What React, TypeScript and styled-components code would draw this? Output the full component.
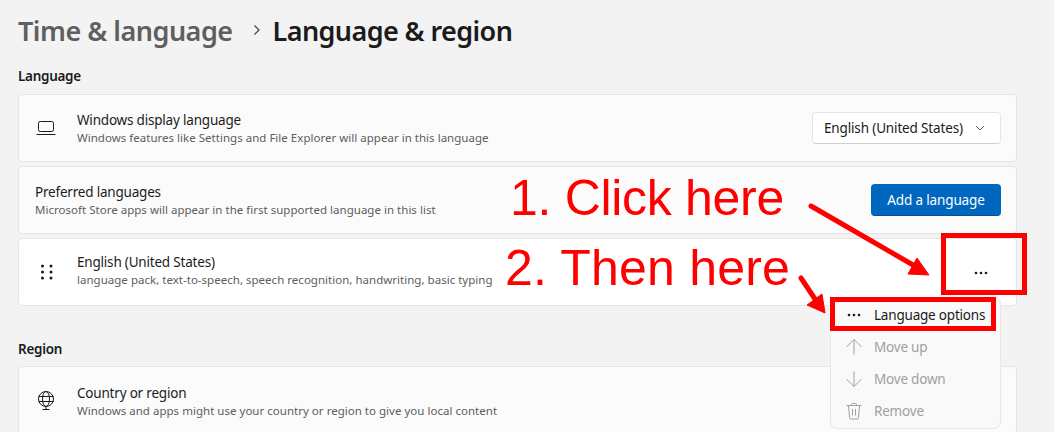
import React from "react";
import styled, { createGlobalStyle } from "styled-components";

const Global = createGlobalStyle`
  html, body { margin: 0; padding: 0; height: 432px; overflow: hidden; background: #f3f3f3; }
  body { font-family: "Noto Sans", "Open Sans", sans-serif; color: #1b1b1b; }
  #root { height: 432px; overflow: hidden; }
`;

const Page = styled.div`
  position: relative;
  width: 1054px;
  height: 432px;
  overflow: hidden;
  box-sizing: border-box;
  padding: 10px 37px 0 18px;
`;
const Breadcrumb = styled.header`
  display: flex;
  align-items: center;
  height: 40px;
  font-size: 27px;
  font-weight: 600;
  letter-spacing: -0.5px;
  white-space: nowrap;
`;
const Parent = styled.span`
  color: #5f5f5f;
`;
const Current = styled.span`
  letter-spacing: -0.6px;
`;
const Crumb = styled.svg`
  width: 10px;
  height: 12px;
  margin: 0 11px 0 19px;
  flex: none;
`;
const SectionTitle = styled.h2<{ $top: number; $bottom: number }>`
  margin: ${(p) => p.$top}px 0 ${(p) => p.$bottom}px;
  height: 20px;
  line-height: 20px;
  font-size: 13.5px;
  font-weight: 600;
  letter-spacing: -0.3px;
  color: #1b1b1b;
`;
const Card = styled.section<{ $white?: boolean }>`
  box-sizing: border-box;
  height: 68px;
  margin-bottom: 4px;
  display: flex;
  align-items: center;
  padding: 0 15px 0 16px;
  background: ${(p) => (p.$white ? "#ffffff" : "#fbfbfb")};
  border: 1px solid #e5e5e5;
  border-radius: 4px;
`;
const IconSlot = styled.div`
  width: 42px;
  flex: none;
  display: flex;
  align-items: center;
`;
const Copy = styled.div<{ $nudge: number }>`
  flex: 1;
  min-width: 0;
  display: flex;
  flex-direction: column;
  margin-top: ${(p) => p.$nudge}px;
`;
const Title = styled.div`
  font-size: 13.5px;
  line-height: 19px;
  color: #1b1b1b;
  letter-spacing: -0.2px;
`;
const Sub = styled.div`
  font-size: 11.5px;
  line-height: 16px;
  color: #5d5d5d;
  letter-spacing: 0.02px;
`;
const Select = styled.div`
  box-sizing: border-box;
  width: 189px;
  height: 32px;
  display: flex;
  align-items: center;
  justify-content: space-between;
  padding: 0 15px 0 11px;
  background: #fff;
  border: 1px solid #e5e5e5;
  border-bottom-color: #d0d0d0;
  border-radius: 4px;
  font-size: 13.5px;
  color: #1b1b1b;
  letter-spacing: -0.15px;
`;
const Primary = styled.button`
  box-sizing: border-box;
  width: 130px;
  height: 32px;
  border: 0;
  border-bottom: 1px solid #0a4f93;
  border-radius: 4px;
  background: #0067c0;
  color: #fff;
  font: inherit;
  font-size: 13.5px;
  letter-spacing: -0.15px;
`;
const More = styled.div`
  width: 41px;
  display: flex;
  justify-content: center;
  flex: none;
  padding-top: 1px;
`;
const Menu = styled.div`
  position: absolute;
  left: 830px;
  top: 297px;
  box-sizing: border-box;
  width: 171px;
  height: 132px;
  padding: 1px 0;
  background: #f9f9f9;
  border: 1px solid #e8e8e8;
  border-radius: 7px;
`;
const MenuItem = styled.div<{ $disabled?: boolean }>`
  display: flex;
  align-items: center;
  height: 32px;
  padding-left: 16px;
  font-size: 13.5px;
  letter-spacing: -0.2px;
  color: ${(p) => (p.$disabled ? "#a0a0a0" : "#1b1b1b")};
`;
const MenuIcon = styled.span`
  width: 27px;
  flex: none;
  display: flex;
`;
const Callout = styled.div<{ $x: number; $y: number; $track: number }>`
  position: absolute;
  left: ${(p) => p.$x}px;
  top: ${(p) => p.$y}px;
  font-family: "Liberation Sans", Arial, sans-serif;
  font-size: 50px;
  line-height: 52px;
  letter-spacing: ${(p) => p.$track}px;
  color: #ff0000;
  white-space: nowrap;
`;
const RedBox = styled.div<{ $x: number; $y: number; $w: number; $h: number }>`
  position: absolute;
  box-sizing: border-box;
  left: ${(p) => p.$x}px;
  top: ${(p) => p.$y}px;
  width: ${(p) => p.$w}px;
  height: ${(p) => p.$h}px;
  border: 5px solid #ff0000;
`;
const Arrows = styled.svg`
  position: absolute;
  left: 0;
  top: 0;
  width: 1054px;
  height: 432px;
  pointer-events: none;
`;

const Dots = ({ color = "#1b1b1b" }: { color?: string }) => (
  <svg width="14" height="4" viewBox="0 0 14 4" fill={color}>
    <circle cx="2" cy="2" r="1.3" />
    <circle cx="7" cy="2" r="1.3" />
    <circle cx="12" cy="2" r="1.3" />
  </svg>
);

const I = { fill: "none", stroke: "currentColor", strokeWidth: 1, width: 18, height: 18, viewBox: "0 0 18 18" } as const;

export default function App() {
  return (
    <Page>
      <Global />
      <Breadcrumb>
        <Parent>Time &amp; language</Parent>
        <Crumb viewBox="0 0 10 12" fill="none" stroke="#4a4a4a" strokeWidth="1.3">
          <path d="M2.5 1.500 7 6l-4.500 4.500" />
        </Crumb>
        <Current>Language &amp; region</Current>
      </Breadcrumb>

      <SectionTitle $top={16} $bottom={8}>Language</SectionTitle>
      <Card>
        <IconSlot>
          <svg width="20" height="16" viewBox="0 0 20 16" fill="none" stroke="#1b1b1b" strokeWidth="1" style={{ marginLeft: 1 }}>
            <rect x="2.500" y="1.500" width="15" height="10" rx="1.800" />
            <path d="M.5 14.500h19" />
          </svg>
        </IconSlot>
        <Copy $nudge={0}>
          <Title>Windows display language</Title>
          <Sub>Windows features like Settings and File Explorer will appear in this language</Sub>
        </Copy>
        <Select>
          <span>English (United States)</span>
          <svg width="10" height="6" viewBox="0 0 10 6" fill="none" stroke="#5d5d5d" strokeWidth="1">
            <path d="M1 1l4 4 4-4" />
          </svg>
        </Select>
      </Card>
      <Card>
        <Copy $nudge={0}>
          <Title>Preferred languages</Title>
          <Sub>Microsoft Store apps will appear in the first supported language in this list</Sub>
        </Copy>
        <Primary>Add a language</Primary>
      </Card>
      <Card $white>
        <IconSlot>
          <svg width="14" height="18" viewBox="0 0 14 18" fill="#1b1b1b" style={{ marginLeft: 5 }}>
            <circle cx="2.500" cy="3" r="1.500" />
            <circle cx="2.500" cy="9" r="1.500" />
            <circle cx="2.500" cy="15" r="1.500" />
            <circle cx="11" cy="3" r="1.500" />
            <circle cx="11" cy="9" r="1.500" />
            <circle cx="11" cy="15" r="1.500" />
          </svg>
        </IconSlot>
        <Copy $nudge={-4}>
          <Title>English (United States)</Title>
          <Sub>language pack, text-to-speech, speech recognition, handwriting, basic typing</Sub>
        </Copy>
        <More>
          <Dots />
        </More>
      </Card>

      <SectionTitle $top={33} $bottom={7}>Region</SectionTitle>
      <Card>
        <IconSlot>
          <svg width="20" height="20" viewBox="0 0 20 20" fill="none" stroke="#1b1b1b" strokeWidth="1" style={{ marginLeft: 1 }}>
            <circle cx="10" cy="9" r="7.500" />
            <ellipse cx="10" cy="9" rx="3.500" ry="7.500" />
            <path d="M2.500 6.500h15M2.500 11.500h15M10 16.500v2.500M6.500 19.500h7" />
          </svg>
        </IconSlot>
        <Copy $nudge={2}>
          <Title>Country or region</Title>
          <Sub>Windows and apps might use your country or region to give you local content</Sub>
        </Copy>
      </Card>

      <Menu>
        <MenuItem>
          <MenuIcon>
            <Dots />
          </MenuIcon>
          Language options
        </MenuItem>
        <MenuItem $disabled>
          <MenuIcon>
            <svg {...I} style={{ marginLeft: -2 }}>
              <path d="M9 16.500V1.500M1.500 9 9 1.500 16.500 9" />
            </svg>
          </MenuIcon>
          Move up
        </MenuItem>
        <MenuItem $disabled>
          <MenuIcon>
            <svg {...I} style={{ marginLeft: -2 }}>
              <path d="M9 1.500v15M1.500 9 9 16.500 16.500 9" />
            </svg>
          </MenuIcon>
          Move down
        </MenuItem>
        <MenuItem $disabled>
          <MenuIcon>
            <svg {...I} style={{ marginLeft: -2 }}>
              <path d="M1.500 3.500h15M6.500 3.500v-1a1 1 0 0 1 1-1h3a1 1 0 0 1 1 1v1M3.500 3.500l1 12a1.500 1.500 0 0 0 1.500 1.500h6a1.500 1.500 0 0 0 1.500-1.500l1-12M7.500 7v6.500M10.500 7v6.500" />
            </svg>
          </MenuIcon>
          Remove
        </MenuItem>
      </Menu>

      <Callout $x={510} $y={172} $track={-0.3}>1. Click here</Callout>
      <Callout $x={505} $y={242} $track={0.2}>2. Then here</Callout>
      <RedBox $x={941} $y={233} $w={86} $h={62} />
      <RedBox $x={830} $y={297} $w={166} $h={34} />
      <Arrows viewBox="0 0 1054 432">
        <g stroke="#ff0000" strokeWidth="5" strokeLinecap="round" fill="#ff0000">
          <path d="M811 206 920 269" fill="none" />
          <path d="M801 278 819 305" fill="none" />
        </g>
        <path d="M929 275 917 258 908 274Z" fill="#ff0000" stroke="#ff0000" strokeWidth="1" />
        <path d="M825 313 822 294 807 305Z" fill="#ff0000" stroke="#ff0000" strokeWidth="1" />
      </Arrows>
    </Page>
  );
}
